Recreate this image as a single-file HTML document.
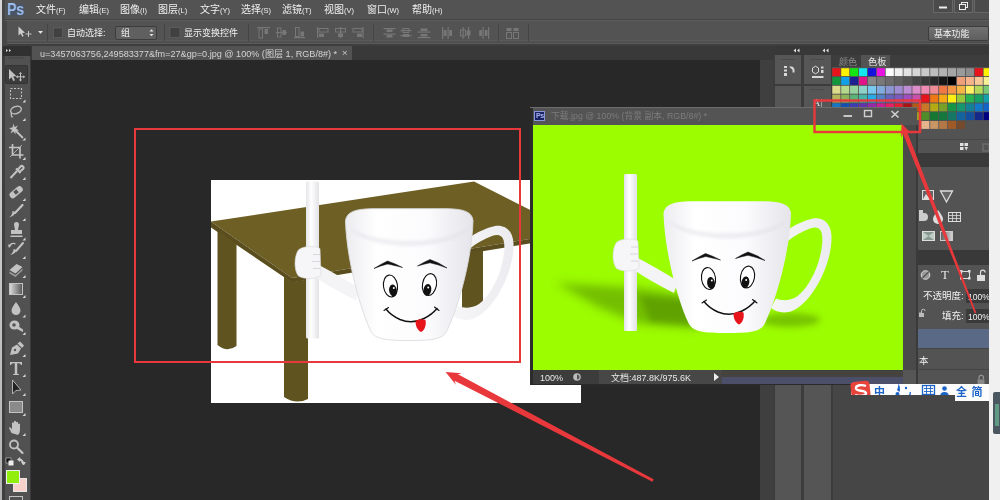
<!DOCTYPE html>
<html lang="zh-CN"><head><meta charset="utf-8"><title>Photoshop</title>
<style>
*{margin:0;padding:0;box-sizing:border-box}
html,body{width:1000px;height:500px;overflow:hidden;background:#282828}
body{font-family:"Liberation Sans","Noto Sans CJK SC",sans-serif;color:#e6e6e6;position:relative}
.abs{position:absolute}
span.abs,#menubar span{will-change:transform}
#menubar{left:0;top:0;width:1000px;height:19px;background:#535353}
#menubar span.m{position:absolute;top:2.500px;font-size:10px;line-height:13px;white-space:nowrap;color:#f0f0f0}
#menubar span.m i{font-style:normal;font-size:7.5px;position:relative;top:-0.5px}
#optbar{left:0;top:20px;width:1000px;height:24px;background:#535353;border-top:1px solid #5e5e5e}
.t9{font-size:9px;line-height:12px;white-space:nowrap;color:#f2f2f2}
</style></head><body>

<div class="abs" style="left:0;top:0;width:1000px;height:500px;background:#282828"></div>
<div id="menubar" class="abs">
<div class="abs" style="left:7px;top:3.500px;width:16.500px;height:12.500px;background:#3c5680;opacity:0.45;filter:blur(1px)"></div><span class="abs" style="left:6.800px;top:0px;font-size:17px;line-height:19px;font-weight:bold;color:#9cbcec;letter-spacing:-0.3px;transform:scaleX(0.84);transform-origin:0 0">Ps</span>
<span class="m" style="left:36px">文件<i>(F)</i></span>
<span class="m" style="left:79px">编辑<i>(E)</i></span>
<span class="m" style="left:120px">图像<i>(I)</i></span>
<span class="m" style="left:158px">图层<i>(L)</i></span>
<span class="m" style="left:200px">文字<i>(Y)</i></span>
<span class="m" style="left:241px">选择<i>(S)</i></span>
<span class="m" style="left:282px">滤镜<i>(T)</i></span>
<span class="m" style="left:324px">视图<i>(V)</i></span>
<span class="m" style="left:367px">窗口<i>(W)</i></span>
<span class="m" style="left:412px">帮助<i>(H)</i></span>
</div>
<div class="abs" style="left:0;top:19px;width:1000px;height:2px;background:#444"></div>
<div id="optbar" class="abs"></div>
<div class="abs" style="left:0;top:40px;width:1000px;height:1px;background:#5a5a5a"></div>
<div class="abs" style="left:0;top:41.500px;width:1000px;height:1px;background:#4c4c4c"></div>
<div class="abs" style="left:0;top:43px;width:1000px;height:1px;background:#5c5c5c"></div>
<div class="abs" style="left:0;top:44px;width:1000px;height:2px;background:#3e3e3e"></div>
<svg class="abs" style="left:0;top:20px" width="1000" height="25" viewBox="0 20 1000 25">
<path d="M18.500 26.500 L18.500 35.500 L20.700 33.600 L22.300 36.800 L23.700 36.100 L22.100 33 L25 32.700 Z" fill="#cdcdcd"/>
<path d="M28.500 31 V37 M25.500 34 H31.500" stroke="#c4c4c4" stroke-width="1"/>
<path d="M38 31 H43 L40.5 33.8 Z" fill="#e8e8e8"/>
<rect x="47" y="24" width="1" height="17" fill="#454545"/>
<rect x="53.500" y="28" width="9" height="9.500" fill="#414141" stroke="#666" stroke-width="0.6"/>
<rect x="115.500" y="26.500" width="41" height="13" rx="1.5" fill="#606060" stroke="#3c3c3c" stroke-width="1"/>
<path d="M149.5 31.5 L151.5 29.3 L153.500 31.500 Z M149.5 34 L151.5 36.2 L153.5 34 Z" fill="#e8e8e8"/>
<rect x="164" y="24" width="1" height="17" fill="#454545"/>
<rect x="170" y="27.5" width="10" height="10" fill="#414141" stroke="#666" stroke-width="0.6"/>
</svg>
<span class="abs t9" style="left:67px;top:26.5px">自动选择:</span>
<span class="abs t9" style="left:121px;top:26.5px">组</span>
<span class="abs t9" style="left:184px;top:26.5px">显示变换控件</span>
<svg class="abs" style="left:240px;top:20px" width="400" height="25" viewBox="240 20 400 25">
<rect x="257" y="27" width="13" height="1.2" fill="#777777"/><rect x="259" y="29" width="3.5" height="9" fill="none" stroke="#777777" stroke-width="1"/><rect x="264.5" y="29" width="3.5" height="5" fill="#777777"/>
<rect x="276" y="32" width="11" height="1.2" fill="#777777"/><rect x="277.5" y="28" width="3.5" height="9" fill="none" stroke="#777777" stroke-width="1"/><rect x="282.5" y="30" width="3.5" height="5" fill="#777777"/>
<rect x="294" y="37" width="11" height="1.2" fill="#777777"/><rect x="295.5" y="27.5" width="3.5" height="9" fill="none" stroke="#777777" stroke-width="1"/><rect x="300.5" y="31.5" width="3.5" height="5" fill="#777777"/>
<rect x="317" y="27" width="1.2" height="11" fill="#777777"/><rect x="319" y="28.5" width="9" height="3.5" fill="none" stroke="#777777" stroke-width="1"/><rect x="319" y="33.5" width="5" height="3.5" fill="#777777"/>
<rect x="340.0" y="27" width="1.2" height="11" fill="#777777"/><rect x="335.5" y="28.5" width="10" height="3.5" fill="none" stroke="#777777" stroke-width="1"/><rect x="338.0" y="33.5" width="5" height="3.5" fill="#777777"/>
<rect x="362.5" y="27" width="1.2" height="11" fill="#777777"/><rect x="353.0" y="28.5" width="9" height="3.5" fill="none" stroke="#777777" stroke-width="1"/><rect x="357.0" y="33.5" width="5" height="3.5" fill="#777777"/>
<rect x="383.5" y="28" width="12" height="1.2" fill="#777777"/><rect x="383.5" y="33.5" width="12" height="1.2" fill="#777777"/><rect x="386.5" y="29.5" width="6" height="2.5" fill="#777777"/><rect x="386.5" y="35" width="6" height="2.5" fill="#777777"/>
<rect x="400.5" y="30" width="11" height="1.2" fill="#777777"/><rect x="400.5" y="35" width="11" height="1.2" fill="#777777"/><rect x="403.0" y="28.5" width="6" height="4" fill="none" stroke="#777777" stroke-width="1"/><rect x="403.0" y="34" width="6" height="3" fill="#777777"/>
<rect x="417.5" y="31.5" width="13" height="1.2" fill="#777777"/><rect x="417.5" y="37" width="13" height="1.2" fill="#777777"/><rect x="420.5" y="28.5" width="7" height="2.5" fill="#777777"/><rect x="420.5" y="34" width="7" height="2.5" fill="#777777"/>
<rect x="442" y="27" width="1.2" height="12" fill="#777777"/><rect x="447.5" y="27" width="1.2" height="12" fill="#777777"/><rect x="443.7" y="30" width="2.8" height="6" fill="#777777"/><rect x="449.2" y="30" width="2.8" height="6" fill="#777777"/>
<rect x="462.5" y="27" width="1.2" height="12" fill="#777777"/><rect x="468.0" y="27" width="1.2" height="12" fill="#777777"/><rect x="460.5" y="30" width="5" height="6" fill="none" stroke="#777777" stroke-width="1"/><rect x="466.5" y="30.5" width="4" height="5" fill="#777777"/>
<rect x="482.5" y="27" width="1.2" height="12" fill="#777777"/><rect x="488.0" y="27" width="1.2" height="12" fill="#777777"/><rect x="479.2" y="30" width="2.8" height="6" fill="#777777"/><rect x="484.7" y="30" width="2.8" height="6" fill="#777777"/>
<rect x="506.5" y="28" width="5" height="3" fill="#777777"/><rect x="513.5" y="28" width="5" height="3" fill="#777777"/><rect x="506.5" y="32.5" width="5" height="6" fill="none" stroke="#777777" stroke-width="1"/><rect x="513.5" y="32.5" width="5" height="6" fill="none" stroke="#777777" stroke-width="1"/>
<rect x="248" y="24" width="1" height="17" fill="#454545"/><rect x="373" y="24" width="1" height="17" fill="#454545"/><rect x="498" y="24" width="1" height="17" fill="#454545"/><rect x="528" y="24" width="1" height="17" fill="#454545"/>
</svg>
<div class="abs" style="left:928px;top:25.500px;width:61px;height:15px;background:linear-gradient(#727272,#5e5e5e);border:1px solid #3c3c3c;border-radius:2px"></div>
<span class="abs t9" style="left:933.500px;top:27.500px;font-size:8.800px">基本功能</span>
<div class="abs" style="left:933px;top:-1px;width:20px;height:13.500px;background:#4b4b4b;border:1px solid #676767"></div>
<div class="abs" style="left:954px;top:-1px;width:19px;height:13.500px;background:#4b4b4b;border:1px solid #676767"></div>
<div class="abs" style="left:974px;top:-1px;width:16px;height:13.500px;background:#4b4b4b;border:1px solid #676767"></div>
<svg class="abs" style="left:930px;top:0" width="60" height="16"><rect x="9" y="6.500" width="8" height="2" fill="#eee"/><rect x="31.500" y="2.500" width="6" height="5" fill="none" stroke="#eee" stroke-width="1"/><rect x="29.500" y="4.500" width="6" height="5" fill="#4b4b4b" stroke="#eee" stroke-width="1"/></svg>
<div class="abs" style="left:3px;top:46px;width:986px;height:14px;background:#393939"></div>
<div class="abs" style="left:32px;top:46px;width:319.500px;height:14px;background:#535353"></div>
<span class="abs" style="left:40px;top:47.5px;font-size:9.100px;line-height:12px;color:#d4d4d4;white-space:nowrap">u=3457063756,249583377&amp;fm=27&amp;gp=0.jpg @ 100% (图层 1, RGB/8#) *</span>
<span class="abs" style="left:341.500px;top:47px;font-size:9.500px;line-height:12px;color:#c8c8c8">×</span>
<div class="abs" style="left:0;top:46px;width:31px;height:454px;background:#515151"></div>
<div class="abs" style="left:2px;top:21px;width:5px;height:25px;background:#464646"></div>
<div class="abs" style="left:2px;top:0;width:2.500px;height:21px;background:#474747"></div>
<div class="abs" style="left:2px;top:46px;width:3px;height:454px;background:#3e3e3e"></div>
<div class="abs" style="left:29.500px;top:46px;width:1.500px;height:454px;background:#3a3a3a"></div>
<div class="abs" style="left:3px;top:46px;width:28px;height:10px;background:#303030"></div>
<div class="abs" style="left:0;top:0;width:2px;height:500px;background:linear-gradient(#d6d6d6,#c4c4c4 60%,#b4b4b4)"></div>
<svg class="abs" style="left:0;top:46px" width="32" height="454" viewBox="0 46 32 454">
<path d="M6 49 L8 50.500 L6 52 Z M9 49 L11 50.500 L9 52 Z" fill="#ddd"/>
<rect x="8" y="57.500" width="16" height="1" fill="#444"/>
<rect x="5.500" y="65.500" width="22" height="18" rx="1" fill="#3c3c3c" stroke="#333" stroke-width="1"/>
<path d="M9 69 L9 79.500 L11.500 77.300 L13.300 81 L15 80.200 L13.200 76.600 L16.500 76.300 Z" fill="#c2c2c2"/><path d="M20.500 73.500 v6.500 M17.200 76.800 h6.600" stroke="#c2c2c2" stroke-width="1"/><path d="M20.500 72 l1.600 2 h-3.200 z M20.500 81.600 l1.600 -2 h-3.200 z M15.800 76.800 l2 -1.600 v3.200 z M25.200 76.800 l-2 -1.600 v3.200 z" fill="#c2c2c2"/><rect x="10.500" y="88.500" width="11" height="10" fill="none" stroke="#c2c2c2" stroke-width="1.100" stroke-dasharray="2 1.500"/><path d="M25.500 99.6 v3 h-3 z" fill="#d8d8d8"/><ellipse cx="16" cy="110" rx="5.500" ry="3.500" fill="none" stroke="#c2c2c2" stroke-width="1.400" transform="rotate(-20 16 110)"/><path d="M11.500 112.500 q-1 3 1 5" stroke="#c2c2c2" stroke-width="1.200" fill="none"/><path d="M25.500 118 v3 h-3 z" fill="#d8d8d8"/><path d="M14 129 L23 138" stroke="#c2c2c2" stroke-width="1.800"/><path d="M13.500 123.500 l1 3.500 l3.500 -1.500 l-2 3 l3 2 l-3.500 0.500 l0 3.500 l-2 -3 l-3 2 l1.500 -3.500 l-3 -2 l3.500 -0.500 z" fill="#c2c2c2"/><path d="M25.500 137.5 v3 h-3 z" fill="#d8d8d8"/><path d="M12.500 144 v11 h11 M9 147.500 h11 v11" fill="none" stroke="#c2c2c2" stroke-width="1.700"/><path d="M10 157 L22 145" stroke="#c2c2c2" stroke-width="0.800"/><path d="M25.500 157 v3 h-3 z" fill="#d8d8d8"/><path d="M10.500 178 L17 171" stroke="#c2c2c2" stroke-width="2"/><path d="M16 168.500 l4.500 4.500 M17.500 170 l3 -3.500 a1.500 1.500 0 0 1 2.500 2.500 l-3.500 3" stroke="#c2c2c2" stroke-width="2" fill="none"/><path d="M25.500 177 v3 h-3 z" fill="#d8d8d8"/><rect x="8.500" y="189" width="15" height="6.500" rx="3" fill="#c2c2c2" transform="rotate(-40 16 192)"/><rect x="14" y="190" width="4" height="4" fill="#555" transform="rotate(-40 16 192)"/><path d="M25.500 198 v3 h-3 z" fill="#d8d8d8"/><path d="M22.500 205 L15 213" stroke="#c2c2c2" stroke-width="2.200" stroke-linecap="round"/><path d="M15.500 212 q-1 4 -6.500 5.500 q3.500 -2.500 3.500 -6.500 z" fill="#c2c2c2"/><path d="M25.500 218 v3 h-3 z" fill="#d8d8d8"/><path d="M14 224.500 a2.500 2.500 0 0 1 5 0 l-1 5.500 h4 v4 h-11 v-4 h4 z" fill="#c2c2c2"/><rect x="10.500" y="235.500" width="12" height="1.500" fill="#c2c2c2"/><path d="M25.500 237.5 v3 h-3 z" fill="#d8d8d8"/><path d="M23 243 L16 251" stroke="#c2c2c2" stroke-width="2" stroke-linecap="round"/><path d="M16.500 250 q-1 4 -6.500 5 q3.500 -2.500 3.500 -6 z" fill="#c2c2c2"/><path d="M9.500 246.500 a4 4 0 0 1 6 -2.500" fill="none" stroke="#c2c2c2" stroke-width="1.300"/><path d="M8 244.500 l3.500 0.500 l-2.500 3 z" fill="#c2c2c2"/><path d="M25.500 256 v3 h-3 z" fill="#d8d8d8"/><path d="M9.500 270 l7 -6 l6 3 l-7 6.500 z" fill="#c2c2c2"/><path d="M9.500 271.500 l6 3.500 l7 -6.500 v2 l-7 6.500 l-6 -3.500 z" fill="#9a9a9a"/><path d="M25.500 275 v3 h-3 z" fill="#d8d8d8"/><rect x="9.500" y="283.500" width="13" height="11" fill="url(#tg)" stroke="#c2c2c2" stroke-width="1"/><path d="M25.500 295 v3 h-3 z" fill="#d8d8d8"/><path d="M16 302 c3 4 4.500 6.500 4.500 8.500 a4.500 4.500 0 0 1 -9 0 c0 -2 1.500 -4.500 4.500 -8.500 z" fill="#c2c2c2"/><path d="M25.500 314.5 v3 h-3 z" fill="#d8d8d8"/><ellipse cx="14.500" cy="325" rx="5" ry="4.500" fill="#c2c2c2"/><path d="M18 326 l5 3.500 v2.500 l-6 -3 z" fill="#c2c2c2"/><circle cx="14" cy="325" r="1.800" fill="#555"/><path d="M25.500 332 v3 h-3 z" fill="#d8d8d8"/><path d="M10 355 l2 -7.500 l5 -3 l4 4 l-3 5 z" fill="#c2c2c2"/><path d="M17.500 343.500 l2.500 -2 l4 4 l-2 2.500 z" fill="#c2c2c2"/><circle cx="15" cy="350" r="1.200" fill="#555"/><path d="M25.500 354 v3 h-3 z" fill="#d8d8d8"/><path d="M10 362 h12 v3 h-1 q-0.500 -1.800 -2 -1.800 h-1.800 v10 q0 1 1.800 1 v0.800 h-6 v-0.800 q1.800 0 1.800 -1 v-10 h-1.800 q-1.500 0 -2 1.800 h-1 z" fill="#c2c2c2"/><path d="M25.500 374 v3 h-3 z" fill="#d8d8d8"/><path d="M12.500 380 L12.500 394 L15.800 390.500 L21 390 Z" fill="#222" stroke="#c2c2c2" stroke-width="0.900"/><path d="M25.500 393 v3 h-3 z" fill="#d8d8d8"/><rect x="9.500" y="401.500" width="13" height="11" fill="#8a8a8a" stroke="#c2c2c2" stroke-width="1"/><path d="M25.500 413 v3 h-3 z" fill="#d8d8d8"/><path d="M11.500 433 l-2.500 -5 q0.500 -1.500 2 0 l1 1.500 v-6.500 q1 -1.500 2 0 v-1.500 q1 -1.500 2 0 v1 q1 -1.500 2 0 v1.500 q1 -1.200 2 0 v6 q0 3 -2 5 z" fill="#c2c2c2"/><path d="M25.500 433 v3 h-3 z" fill="#d8d8d8"/><circle cx="14" cy="444.500" r="4" fill="none" stroke="#c2c2c2" stroke-width="1.800"/><path d="M17 447.500 L22.500 453" stroke="#c2c2c2" stroke-width="2.200" stroke-linecap="round"/><rect x="6" y="458" width="5" height="5" fill="#111" stroke="#ccc" stroke-width="0.600"/><rect x="8.500" y="460.500" width="5" height="5" fill="#eee"/><path d="M19 459.500 q4 -1 4.500 4 M17.500 459.500 l2.500 -1.800 v3.600 z M23.500 465 l-1.800 -2.500 h3.600 z" stroke="#ccc" stroke-width="1" fill="#ccc"/><rect x="13.500" y="478.500" width="13" height="13" fill="#f8d2c8" stroke="#e8e8e8" stroke-width="1"/><rect x="6.500" y="470.500" width="13" height="13" fill="#92ee0c" stroke="#ececec" stroke-width="1"/><rect x="9.500" y="496.500" width="13" height="6" fill="none" stroke="#c2c2c2" stroke-width="1"/><defs><linearGradient id="tg" x1="0" x2="1"><stop offset="0" stop-color="#ddd"/><stop offset="1" stop-color="#555"/></linearGradient></defs>
</svg>
<div class="abs" style="left:773px;top:46px;width:216px;height:454px;background:#535353"></div>
<div class="abs" style="left:760px;top:60px;width:13px;height:440px;background:#3f3f3f"></div>
<div class="abs" style="left:773px;top:46px;width:216px;height:8.500px;background:#383838"></div>
<div class="abs" style="left:773px;top:55px;width:60px;height:52px;background:#3c3c3c"></div>
<div class="abs" style="left:775px;top:54.500px;width:26px;height:29.500px;background:#565656"></div>
<div class="abs" style="left:775px;top:85.500px;width:26px;height:21.500px;background:#565656"></div>
<div class="abs" style="left:804px;top:54.500px;width:27px;height:29.500px;background:#565656"></div>
<div class="abs" style="left:804px;top:85.500px;width:27px;height:21.500px;background:#565656"></div>
<svg class="abs" style="left:773px;top:46px" width="60" height="62" viewBox="773 46 60 62">
<path d="M796 48.500 L793.500 50.500 L796 52.500 Z M799.500 48.500 L797 50.500 L799.500 52.500 Z" fill="#ddd"/>
<path d="M825 48.500 L822.500 50.500 L825 52.500 Z M828.500 48.500 L826 50.500 L828.500 52.500 Z" fill="#ddd"/>
<rect x="781" y="59" width="14" height="1" fill="#4a4a4a"/><rect x="810" y="59" width="14" height="1" fill="#4a4a4a"/><rect x="810" y="89" width="14" height="1" fill="#4a4a4a"/>
<g fill="#d8d8d8"><rect x="784" y="66" width="3" height="2"/><rect x="784" y="69.500" width="3" height="2"/><rect x="784" y="73" width="3" height="3"/>
<path d="M789 66.500 h3 q3 1 2.500 6 l-2 0 q0.500 -3.500 -1.500 -4 z"/></g>
<g fill="#d8d8d8"><path d="M812.500 68 l3 -1.800 l3 1.800 v4 l-3 1.800 l-3 -1.800 z" fill="none" stroke="#d8d8d8" stroke-width="1"/><rect x="821" y="66.500" width="2.500" height="2"/><rect x="821" y="70" width="2.500" height="3"/><rect x="812" y="76" width="11.500" height="2"/></g>
</svg>
<span class="abs" style="left:813px;top:96.500px;font-size:10px;line-height:12px;color:#ddd;font-family:'Liberation Serif',serif">A|</span>
<div class="abs" style="left:833px;top:55px;width:156px;height:13px;background:#3d3d3d"></div>
<div class="abs" style="left:861px;top:54.500px;width:29px;height:13px;background:#535353"></div>
<span class="abs" style="left:838.500px;top:55.500px;font-size:9px;line-height:12px;color:#8a8a8a">颜色</span>
<span class="abs" style="left:867.500px;top:55.500px;font-size:9.200px;line-height:12px;color:#e8e8e8">色板</span>
<svg class="abs" style="left:832px;top:67px" width="158" height="66" viewBox="832 67 158 66">
<rect x="832" y="67" width="158" height="66" fill="#535353"/>
<rect x="832.3" y="68.2" width="8.100" height="7.900" fill="#e8141c"/>
<rect x="841.2" y="68.2" width="8.100" height="7.900" fill="#fff200"/>
<rect x="850.1" y="68.2" width="8.100" height="7.900" fill="#14e614"/>
<rect x="859.0" y="68.2" width="8.100" height="7.900" fill="#14e6f0"/>
<rect x="867.9" y="68.2" width="8.100" height="7.900" fill="#1414dc"/>
<rect x="876.8" y="68.2" width="8.100" height="7.900" fill="#e814e0"/>
<rect x="885.7" y="68.2" width="8.100" height="7.900" fill="#ffffff"/>
<rect x="894.6" y="68.2" width="8.100" height="7.900" fill="#f0f0f0"/>
<rect x="903.5" y="68.2" width="8.100" height="7.900" fill="#e2e2e2"/>
<rect x="912.4" y="68.2" width="8.100" height="7.900" fill="#d6d6d6"/>
<rect x="921.3" y="68.2" width="8.100" height="7.900" fill="#cacaca"/>
<rect x="930.2" y="68.2" width="8.100" height="7.900" fill="#bebebe"/>
<rect x="939.1" y="68.2" width="8.100" height="7.900" fill="#b2b2b2"/>
<rect x="948.0" y="68.2" width="8.100" height="7.900" fill="#a6a6a6"/>
<rect x="956.9" y="68.2" width="8.100" height="7.900" fill="#9a9a9a"/>
<rect x="965.8" y="68.2" width="8.100" height="7.900" fill="#8e8e8e"/>
<rect x="974.7" y="68.2" width="8.100" height="7.900" fill="#e8141c"/>
<rect x="983.6" y="68.2" width="8.100" height="7.900" fill="#fff200"/>
<rect x="832.3" y="77.0" width="8.100" height="7.900" fill="#14963c"/>
<rect x="841.2" y="77.0" width="8.100" height="7.900" fill="#14a0e6"/>
<rect x="850.1" y="77.0" width="8.100" height="7.900" fill="#1c2090"/>
<rect x="859.0" y="77.0" width="8.100" height="7.900" fill="#e01488"/>
<rect x="867.9" y="77.0" width="8.100" height="7.900" fill="#868686"/>
<rect x="876.8" y="77.0" width="8.100" height="7.900" fill="#787878"/>
<rect x="885.7" y="77.0" width="8.100" height="7.900" fill="#6c6c6c"/>
<rect x="894.6" y="77.0" width="8.100" height="7.900" fill="#606060"/>
<rect x="903.5" y="77.0" width="8.100" height="7.900" fill="#545454"/>
<rect x="912.4" y="77.0" width="8.100" height="7.900" fill="#464646"/>
<rect x="921.3" y="77.0" width="8.100" height="7.900" fill="#3a3a3a"/>
<rect x="930.2" y="77.0" width="8.100" height="7.900" fill="#2a2a2a"/>
<rect x="939.1" y="77.0" width="8.100" height="7.900" fill="#161616"/>
<rect x="948.0" y="77.0" width="8.100" height="7.900" fill="#000000"/>
<rect x="956.9" y="77.0" width="8.100" height="7.900" fill="#f0a078"/>
<rect x="965.8" y="77.0" width="8.100" height="7.900" fill="#f5b48c"/>
<rect x="974.7" y="77.0" width="8.100" height="7.900" fill="#f5c896"/>
<rect x="983.6" y="77.0" width="8.100" height="7.900" fill="#f5f096"/>
<rect x="832.3" y="85.8" width="8.100" height="7.900" fill="#dcdc8c"/>
<rect x="841.2" y="85.8" width="8.100" height="7.900" fill="#b4d88c"/>
<rect x="850.1" y="85.8" width="8.100" height="7.900" fill="#96d2a0"/>
<rect x="859.0" y="85.8" width="8.100" height="7.900" fill="#8cd2c8"/>
<rect x="867.9" y="85.8" width="8.100" height="7.900" fill="#78c8f0"/>
<rect x="876.8" y="85.8" width="8.100" height="7.900" fill="#82aadc"/>
<rect x="885.7" y="85.8" width="8.100" height="7.900" fill="#8c96d2"/>
<rect x="894.6" y="85.8" width="8.100" height="7.900" fill="#a08cd2"/>
<rect x="903.5" y="85.8" width="8.100" height="7.900" fill="#be8cd2"/>
<rect x="912.4" y="85.8" width="8.100" height="7.900" fill="#dc8cc8"/>
<rect x="921.3" y="85.8" width="8.100" height="7.900" fill="#f08cb4"/>
<rect x="930.2" y="85.8" width="8.100" height="7.900" fill="#f08c96"/>
<rect x="939.1" y="85.8" width="8.100" height="7.900" fill="#f07846"/>
<rect x="948.0" y="85.8" width="8.100" height="7.900" fill="#f59646"/>
<rect x="956.9" y="85.8" width="8.100" height="7.900" fill="#f5b446"/>
<rect x="965.8" y="85.8" width="8.100" height="7.900" fill="#fff064"/>
<rect x="974.7" y="85.8" width="8.100" height="7.900" fill="#b4d85a"/>
<rect x="983.6" y="85.8" width="8.100" height="7.900" fill="#78c878"/>
<rect x="832.3" y="94.6" width="8.100" height="7.900" fill="#b4b45a"/>
<rect x="841.2" y="94.6" width="8.100" height="7.900" fill="#8cb45a"/>
<rect x="850.1" y="94.6" width="8.100" height="7.900" fill="#5ab478"/>
<rect x="859.0" y="94.6" width="8.100" height="7.900" fill="#46b4aa"/>
<rect x="867.9" y="94.6" width="8.100" height="7.900" fill="#28aae6"/>
<rect x="876.8" y="94.6" width="8.100" height="7.900" fill="#5082c8"/>
<rect x="885.7" y="94.6" width="8.100" height="7.900" fill="#6464be"/>
<rect x="894.6" y="94.6" width="8.100" height="7.900" fill="#7d5abe"/>
<rect x="903.5" y="94.6" width="8.100" height="7.900" fill="#a050be"/>
<rect x="912.4" y="94.6" width="8.100" height="7.900" fill="#c850aa"/>
<rect x="921.3" y="94.6" width="8.100" height="7.900" fill="#e6141c"/>
<rect x="930.2" y="94.6" width="8.100" height="7.900" fill="#f07814"/>
<rect x="939.1" y="94.6" width="8.100" height="7.900" fill="#f5aa14"/>
<rect x="948.0" y="94.6" width="8.100" height="7.900" fill="#fff014"/>
<rect x="956.9" y="94.6" width="8.100" height="7.900" fill="#96c83c"/>
<rect x="965.8" y="94.6" width="8.100" height="7.900" fill="#28b450"/>
<rect x="974.7" y="94.6" width="8.100" height="7.900" fill="#14a064"/>
<rect x="983.6" y="94.6" width="8.100" height="7.900" fill="#14a0aa"/>
<rect x="832.3" y="103.4" width="8.100" height="7.900" fill="#1478c8"/>
<rect x="841.2" y="103.4" width="8.100" height="7.900" fill="#1450b4"/>
<rect x="850.1" y="103.4" width="8.100" height="7.900" fill="#3c3cb4"/>
<rect x="859.0" y="103.4" width="8.100" height="7.900" fill="#6432aa"/>
<rect x="867.9" y="103.4" width="8.100" height="7.900" fill="#9628aa"/>
<rect x="876.8" y="103.4" width="8.100" height="7.900" fill="#c81e96"/>
<rect x="885.7" y="103.4" width="8.100" height="7.900" fill="#e61e64"/>
<rect x="894.6" y="103.4" width="8.100" height="7.900" fill="#e61e32"/>
<rect x="903.5" y="103.4" width="8.100" height="7.900" fill="#aa1414"/>
<rect x="912.4" y="103.4" width="8.100" height="7.900" fill="#b45a14"/>
<rect x="921.3" y="103.4" width="8.100" height="7.900" fill="#c87828"/>
<rect x="930.2" y="103.4" width="8.100" height="7.900" fill="#b4aa14"/>
<rect x="939.1" y="103.4" width="8.100" height="7.900" fill="#78a028"/>
<rect x="948.0" y="103.4" width="8.100" height="7.900" fill="#149646"/>
<rect x="956.9" y="103.4" width="8.100" height="7.900" fill="#14966e"/>
<rect x="965.8" y="103.4" width="8.100" height="7.900" fill="#148296"/>
<rect x="974.7" y="103.4" width="8.100" height="7.900" fill="#1478c8"/>
<rect x="983.6" y="103.4" width="8.100" height="7.900" fill="#1464c8"/>
<rect x="832.3" y="112.2" width="8.100" height="7.900" fill="#14146e"/>
<rect x="841.2" y="112.2" width="8.100" height="7.900" fill="#3c1478"/>
<rect x="850.1" y="112.2" width="8.100" height="7.900" fill="#64147d"/>
<rect x="859.0" y="112.2" width="8.100" height="7.900" fill="#8c1464"/>
<rect x="867.9" y="112.2" width="8.100" height="7.900" fill="#aa143c"/>
<rect x="876.8" y="112.2" width="8.100" height="7.900" fill="#aa1420"/>
<rect x="885.7" y="112.2" width="8.100" height="7.900" fill="#781414"/>
<rect x="894.6" y="112.2" width="8.100" height="7.900" fill="#8c4614"/>
<rect x="903.5" y="112.2" width="8.100" height="7.900" fill="#a07814"/>
<rect x="912.4" y="112.2" width="8.100" height="7.900" fill="#a0a01e"/>
<rect x="921.3" y="112.2" width="8.100" height="7.900" fill="#508c28"/>
<rect x="930.2" y="112.2" width="8.100" height="7.900" fill="#147832"/>
<rect x="939.1" y="112.2" width="8.100" height="7.900" fill="#14783c"/>
<rect x="948.0" y="112.2" width="8.100" height="7.900" fill="#147864"/>
<rect x="956.9" y="112.2" width="8.100" height="7.900" fill="#1464a0"/>
<rect x="965.8" y="112.2" width="8.100" height="7.900" fill="#1450a0"/>
<rect x="974.7" y="112.2" width="8.100" height="7.900" fill="#14288c"/>
<rect x="983.6" y="112.2" width="8.100" height="7.900" fill="#000080"/>
<rect x="921.3" y="121.0" width="8.100" height="7.900" fill="#e6b48c"/>
<rect x="930.2" y="121.0" width="8.100" height="7.900" fill="#c89664"/>
<rect x="939.1" y="121.0" width="8.100" height="7.900" fill="#b47846"/>
<rect x="948.0" y="121.0" width="8.100" height="7.900" fill="#a05a28"/>
<rect x="956.9" y="121.0" width="8.100" height="7.900" fill="#8c4614" opacity="0.6"/>
</svg>
<div class="abs" style="left:917px;top:132px;width:72px;height:368px;background:#535353"></div>
<div class="abs" style="left:917px;top:138.500px;width:72px;height:1.500px;background:#484848"></div>
<div class="abs" style="left:917px;top:153px;width:72px;height:14px;background:#3a3a3a"></div>
<div class="abs" style="left:917.500px;top:250px;width:72px;height:15px;background:#393939"></div>
<div class="abs" style="left:966px;top:289px;width:23px;height:14px;background:#3a3a3a"></div>
<div class="abs" style="left:966px;top:309px;width:23px;height:14px;background:#3a3a3a"></div>
<span class="abs t9" style="left:923px;top:290px;font-size:9.500px">不透明度:</span>
<span class="abs t9" style="left:942px;top:310px;font-size:9.500px">填充:</span>
<span class="abs t9" style="left:968px;top:290.500px;font-size:8.500px">100%</span>
<span class="abs t9" style="left:968px;top:310.500px;font-size:8.500px">100%</span>
<div class="abs" style="left:917.500px;top:329px;width:72px;height:19px;background:#5a6986"></div>
<div class="abs" style="left:919px;top:348px;width:70px;height:1px;background:#444"></div>
<div class="abs" style="left:919px;top:369px;width:70px;height:1px;background:#444"></div>
<span class="abs t9" style="left:919px;top:354.500px;font-size:9.500px">本</span>
<svg class="abs" style="left:917px;top:132px" width="72" height="260" viewBox="917 132 72 260">
<g fill="#e0e0e0"><rect x="960" y="143" width="3.500" height="3"/><rect x="964.500" y="143" width="3.500" height="3"/><rect x="960" y="147" width="3.500" height="3"/><path d="M964.500 147 h3.500 l-1.700 3.500 z"/></g>
<rect x="983" y="144" width="6" height="7" fill="none" stroke="#777" stroke-width="1"/>
<rect x="922.500" y="190.500" width="11" height="9" fill="#666" stroke="#ddd" stroke-width="1"/><path d="M923 199 l3 -5 l2.500 3 l2 -2 l3 4 z" fill="#ddd"/>
<path d="M940.500 191 h12 l-6 11 z" fill="#666" stroke="#ddd" stroke-width="1.300"/>
<path d="M919 210 h4 v3 h-4 z M919 213 h5 a4 4 0 0 1 0 8 h-5 z" fill="#ccc"/>
<path d="M938 210 c3 4 5 7 5 9 a5 5 0 0 1 -10 0 c0 -2 2 -5 5 -9 z" fill="#ddd"/>
<rect x="948.500" y="212.500" width="12" height="9" fill="none" stroke="#ddd" stroke-width="1"/><path d="M952.500 212.500 v9 M956.500 212.500 v9 M948.500 215.500 h12 M948.500 218.500 h12" stroke="#ddd" stroke-width="0.800"/>
<rect x="922.500" y="231.500" width="12" height="9" fill="#8a9a92" stroke="#ddd" stroke-width="1"/><path d="M923 232 l5.500 4 l-5.500 4 z M934 232 l-5.500 4 l5.500 4 z" fill="#bfcfc8"/>
<rect x="940.500" y="231.500" width="12" height="9" fill="url(#gr1)" stroke="#ccc" stroke-width="1"/>
<circle cx="925.500" cy="275" r="4.300" fill="#999" stroke="#ddd" stroke-width="1"/><path d="M922.500 278 l6 -6" stroke="#555" stroke-width="1.500"/>
<rect x="961.500" y="271.500" width="8" height="7" fill="none" stroke="#ddd" stroke-width="1"/><rect x="960" y="270" width="2.500" height="2.500" fill="#ddd"/><rect x="968" y="270" width="2.500" height="2.500" fill="#ddd"/><rect x="960" y="277" width="2.500" height="2.500" fill="#ddd"/><rect x="968" y="277" width="2.500" height="2.500" fill="#ddd"/>
<rect x="977" y="275" width="8" height="6" fill="#ddd"/><path d="M980.500 275 v-2.500 a2.300 2.300 0 0 1 4.600 0" fill="none" stroke="#ddd" stroke-width="1.200"/>
<rect x="977.500" y="379.500" width="7" height="5" fill="#888"/><path d="M979 379.500 v-2 a2.200 2.200 0 0 1 4.400 0 v2" fill="none" stroke="#999" stroke-width="1.100"/>
<path d="M919 313 h2.500 v-2 a1.800 1.800 0 0 1 3.600 0" fill="none" stroke="#bbb" stroke-width="1"/><rect x="919" y="313" width="5" height="4" fill="#bbb"/>
<defs><linearGradient id="gr1" x1="0" x2="1"><stop offset="0" stop-color="#5a5a5a"/><stop offset="1" stop-color="#d8d8d8"/></linearGradient></defs>
</svg>
<span class="abs" style="left:941px;top:268px;font-size:13px;line-height:14px;color:#e4e4e4;font-family:'Liberation Serif',serif">T</span>
<div class="abs" style="left:773px;top:385px;width:60px;height:115px;background:#3c3c3c"></div>
<div class="abs" style="left:775px;top:385px;width:26px;height:115px;background:#555"></div>
<div class="abs" style="left:804px;top:385px;width:27px;height:115px;background:#555"></div>
<div class="abs" style="left:833px;top:385px;width:156px;height:115px;background:#464646"></div>
<svg class="abs" style="left:32px;top:60px" width="728" height="440" viewBox="32 60 728 440">
<defs>
<filter id="blur6" x="-30%" y="-80%" width="160%" height="260%"><feGaussianBlur stdDeviation="5"/></filter>
<filter id="blur4" x="-30%" y="-80%" width="160%" height="260%"><feGaussianBlur stdDeviation="3"/></filter>
<linearGradient id="cupg" x1="0" x2="1"><stop offset="0" stop-color="#ececf0"/><stop offset="0.250" stop-color="#ffffff"/><stop offset="0.650" stop-color="#fbfbfd"/><stop offset="1" stop-color="#e4e4ea"/></linearGradient>
<filter id="blur1"><feGaussianBlur stdDeviation="1.5"/></filter>
<linearGradient id="handg" x1="0" x2="1"><stop offset="0" stop-color="#f6f6f8"/><stop offset="1" stop-color="#ececf0"/></linearGradient>
<linearGradient id="rimg" x1="0" x2="1"><stop offset="0" stop-color="#f4f4f6"/><stop offset="0.450" stop-color="#dadade"/><stop offset="0.700" stop-color="#ececf0"/><stop offset="1" stop-color="#f8f8fa"/></linearGradient>
<linearGradient id="stickg" x1="0" x2="1"><stop offset="0" stop-color="#e4e4e8"/><stop offset="0.400" stop-color="#ffffff"/><stop offset="1" stop-color="#e2e2e6"/></linearGradient>
</defs>
<rect x="211" y="180" width="370" height="223" fill="#ffffff"/>
<path d="M211 221.500 L474 181.500 L560 225 L560 234 L292 278 Z" fill="#6e5f24"/>
<path d="M211 221.500 L292 278 L560 234 L560 238.500 L292 282.500 L211 227.500 Z" fill="#5a4e1e"/>
<path d="M217.500 231 L236.500 244 L236.500 346 Q227 353 217.500 345 Z" fill="#5f5320"/>
<path d="M284 276.500 L292 282 L308 279.500 L308 399 Q296 405 284 397 Z" fill="#5f5320"/>
<path d="M462 253.500 L483 250 L483 306 L462 309 Z" fill="#5f5320"/>
<g transform="translate(-318,7.5)"><rect x="624" y="174" width="13" height="157" rx="1.5" fill="url(#stickg)"/><path d="M636 257 Q655 267 678 281 L674 293 Q650 281 634 270 Z" fill="#f4f4f6"/><path d="M786 231 C796 224 806 220 813 218.500 C824 217 831 224 831.500 236 C832 250 827 268 818 284 C810 298 800 308 792 311 C784 314 776 312 771 308 L776 298.500 C782 301 790 301 797 296.500 C806 290 814 276 818.500 262 C822 250 823.500 240 821.500 232.500 C820 227 815 226.500 810 228.500 C802 231.500 794 236 788 241 Z" fill="url(#handg)"/><path d="M663.500 213 C665 204 674 201.500 690 201.200 L765 201.200 C781 201.500 790 204 791 213 C790 250 777 298 765.500 322 C762 332 750 333 727 333 C704 333 692 332 688 322 C677 298 664.500 250 663.500 213 Z" fill="url(#cupg)" stroke="#dcdce0" stroke-width="0.9"/><path d="M667 219 C690 238 764 238 788 219 C770 245 684 245 667 219 Z" fill="#d8d8e0" opacity="0.4" filter="url(#blur1)"/><path d="M616 243 C620 238 634 238 638 241 L639 268 C634 272 620 272 616 268 C612 262 612 250 616 243 Z" fill="#f6f6f8" stroke="#d8d8dc" stroke-width="0.6"/>
<path d="M631 247 L638 247 M630 254 L638 254 M631 261 L638 261" stroke="#cfcfd4" stroke-width="0.8" fill="none"/><path d="M692 261 Q700 256 705.5 253.5 Q713 256 720.500 260 Q711 257.5 705.5 256.5 Q699 258 692 261 Z" fill="#111" stroke="#111" stroke-width="0.500"/>
<path d="M735.500 258.500 Q742 254.500 748 252 Q757 255 765 260.500 Q756 257 748 255.300 Q742 256.500 735.500 258.500 Z" fill="#111" stroke="#111" stroke-width="0.500"/>
<ellipse cx="708.500" cy="278.500" rx="7" ry="11" fill="#fff" stroke="#111" stroke-width="1.100" transform="rotate(-8 708.500 278.500)"/>
<ellipse cx="711" cy="283" rx="3.900" ry="6" fill="#111" transform="rotate(-8 711 283)"/>
<circle cx="711.800" cy="280.500" r="1" fill="#fff"/>
<ellipse cx="747.500" cy="277" rx="7" ry="11" fill="#fff" stroke="#111" stroke-width="1.100" transform="rotate(10 747.500 277)"/>
<ellipse cx="745.400" cy="282.400" rx="3.900" ry="6" fill="#111" transform="rotate(10 745.400 282.400)"/>
<circle cx="746.200" cy="280" r="1" fill="#fff"/>
<path d="M704 301.500 Q709 308 718 312 Q730 317 742 311 Q750 307 755 301" fill="none" stroke="#111" stroke-width="1.400" stroke-linecap="round"/>
<path d="M702 303 L706.500 300 M752.500 299.500 L757 303" stroke="#111" stroke-width="1.100" stroke-linecap="round"/>
<path d="M733.500 313.500 C736 311.500 741 311 743.500 312.500 C744.500 318 742.500 323 739 324.500 C735 322.500 733.500 318 733.500 313.500 Z" fill="#e8141c"/></g>
</svg>
<div class="abs" style="left:530px;top:107px;width:387px;height:278px;background:#4c4c4c"></div>
<div class="abs" style="left:530px;top:107px;width:387px;height:18px;background:#545454;border-top:1px solid #6c6c6c"></div>
<div class="abs" style="left:530px;top:108px;width:3px;height:277px;background:#2c2c2c"></div>
<div class="abs" style="left:533px;top:370px;width:384px;height:15px;background:#3e3e3e"></div>
<div class="abs" style="left:533px;top:370px;width:189px;height:15px;background:#474747"></div>
<div class="abs" style="left:533px;top:370px;width:66px;height:15px;background:#3c3c3c"></div>
<div class="abs" style="left:722px;top:371px;width:181px;height:6px;background:#46423e"></div>
<div class="abs" style="left:722px;top:377px;width:181px;height:7px;background:#4b4f6a"></div>
<div class="abs" style="left:903px;top:370px;width:14px;height:15px;background:#565656"></div>
<div class="abs" style="left:530px;top:384px;width:387px;height:1px;background:#2a2a2a"></div>
<div class="abs" style="left:903px;top:125px;width:14px;height:245px;background:#4a4a4a"></div>
<div class="abs" style="left:534px;top:110.500px;width:10.500px;height:10.500px;background:#1a2266;border:0.500px solid #8a96d8"></div>
<span class="abs" style="left:535.500px;top:111px;font-size:7px;line-height:9px;font-weight:bold;color:#aab6f0;letter-spacing:-0.300px">Ps</span>
<span class="abs" style="left:550.500px;top:110px;font-size:8.800px;line-height:12px;color:#7c7c7c;white-space:nowrap">下载.jpg @ 100% (背景 副本, RGB/8#) *</span>
<span class="abs t9" style="left:540px;top:371.500px;color:#e8e8e8">100%</span>
<span class="abs t9" style="left:611px;top:371.500px;color:#e8e8e8">文档:487.8K/975.6K</span>
<svg class="abs" style="left:533px;top:125px" width="370" height="245" viewBox="533 125 370 245">
<rect x="533" y="125" width="370" height="245" fill="#9cfc00"/>
<g transform="translate(0,0)"><path d="M556 283 L640 288 L694 296 L700 328 L640 324 L600 308 Z" fill="#4c8200" opacity="0.5" filter="url(#blur6)"/>
<path d="M640 296 L694 300 L698 326 L650 322 Z" fill="#3c7000" opacity="0.35" filter="url(#blur4)"/>
<ellipse cx="790" cy="320" rx="30" ry="7" fill="#4c8200" opacity="0.45" filter="url(#blur4)"/><rect x="624" y="174" width="13" height="157" rx="1.5" fill="url(#stickg)"/><path d="M636 257 Q655 267 678 281 L674 293 Q650 281 634 270 Z" fill="#f4f4f6"/><path d="M786 231 C796 224 806 220 813 218.500 C824 217 831 224 831.500 236 C832 250 827 268 818 284 C810 298 800 308 792 311 C784 314 776 312 771 308 L776 298.500 C782 301 790 301 797 296.500 C806 290 814 276 818.500 262 C822 250 823.500 240 821.500 232.500 C820 227 815 226.500 810 228.500 C802 231.500 794 236 788 241 Z" fill="url(#handg)"/><path d="M663.500 213 C665 204 674 201.500 690 201.200 L765 201.200 C781 201.500 790 204 791 213 C790 250 777 298 765.500 322 C762 332 750 333 727 333 C704 333 692 332 688 322 C677 298 664.500 250 663.500 213 Z" fill="url(#cupg)" /><path d="M667 219 C690 238 764 238 788 219 C770 245 684 245 667 219 Z" fill="#d8d8e0" opacity="0.4" filter="url(#blur1)"/><path d="M616 243 C620 238 634 238 638 241 L639 268 C634 272 620 272 616 268 C612 262 612 250 616 243 Z" fill="#f6f6f8" stroke="#d8d8dc" stroke-width="0.6"/>
<path d="M631 247 L638 247 M630 254 L638 254 M631 261 L638 261" stroke="#cfcfd4" stroke-width="0.8" fill="none"/><path d="M692 261 Q700 256 705.5 253.5 Q713 256 720.500 260 Q711 257.5 705.5 256.5 Q699 258 692 261 Z" fill="#111" stroke="#111" stroke-width="0.500"/>
<path d="M735.500 258.500 Q742 254.500 748 252 Q757 255 765 260.500 Q756 257 748 255.300 Q742 256.500 735.500 258.500 Z" fill="#111" stroke="#111" stroke-width="0.500"/>
<ellipse cx="708.500" cy="278.500" rx="7" ry="11" fill="#fff" stroke="#111" stroke-width="1.100" transform="rotate(-8 708.500 278.500)"/>
<ellipse cx="711" cy="283" rx="3.900" ry="6" fill="#111" transform="rotate(-8 711 283)"/>
<circle cx="711.800" cy="280.500" r="1" fill="#fff"/>
<ellipse cx="747.500" cy="277" rx="7" ry="11" fill="#fff" stroke="#111" stroke-width="1.100" transform="rotate(10 747.500 277)"/>
<ellipse cx="745.400" cy="282.400" rx="3.900" ry="6" fill="#111" transform="rotate(10 745.400 282.400)"/>
<circle cx="746.200" cy="280" r="1" fill="#fff"/>
<path d="M704 301.500 Q709 308 718 312 Q730 317 742 311 Q750 307 755 301" fill="none" stroke="#111" stroke-width="1.400" stroke-linecap="round"/>
<path d="M702 303 L706.500 300 M752.500 299.500 L757 303" stroke="#111" stroke-width="1.100" stroke-linecap="round"/>
<path d="M733.500 313.500 C736 311.500 741 311 743.500 312.500 C744.500 318 742.500 323 739 324.500 C735 322.500 733.500 318 733.500 313.500 Z" fill="#e8141c"/></g>
</svg>
<svg class="abs" style="left:530px;top:107px" width="400" height="280" viewBox="530 107 400 280">
<circle cx="577" cy="377" r="3.800" fill="#bbb"/><path d="M577 374.500 a2.500 2.500 0 0 1 0 5" fill="#555"/>
<path d="M714 373 L719 377 L714 381 Z" fill="#eee"/>
<rect x="843.500" y="115" width="8.500" height="2" fill="#c8c8c8"/>
<rect x="864.500" y="110.500" width="7" height="6" fill="none" stroke="#d0d0d0" stroke-width="1.400"/>
<path d="M891.500 111 L898.500 117.500 M898.500 111 L891.500 117.500" stroke="#d0d0d0" stroke-width="1.600"/>
</svg>
<div class="abs" style="left:915.500px;top:125px;width:2px;height:375px;background:#3a3a3a"></div>
<div class="abs" style="left:989px;top:0;width:11px;height:500px;background:#f0f0f0"></div>
<div class="abs" style="left:993px;top:392px;width:7px;height:42px;background:#4a5660;border-radius:2px 0 0 2px"></div>
<div class="abs" style="left:995px;top:404px;width:4px;height:22px;background:#5e9a84"></div>
<div class="abs" style="left:851px;top:384px;width:138px;height:17px;background:#fdfdfd"></div>
<span class="abs" style="left:874px;top:385px;font-size:11px;line-height:14px;color:#1c64c8;font-weight:bold;white-space:nowrap;letter-spacing:0">中</span>
<span class="abs" style="left:955.500px;top:385px;font-size:11px;line-height:14px;color:#1c64c8;font-weight:bold;white-space:nowrap;letter-spacing:4.500px">全简</span>
<svg class="abs" style="left:845px;top:378px" width="145" height="24" viewBox="845 378 145 24">
<path d="M850.500 386 Q850 382.500 854 382 L865 380.800 Q869 380.500 869.500 384 L870.500 394 Q870.800 397.500 867 398 L856 399 Q852 399.300 851.500 396 Z" fill="#e8443c"/>
<path d="M866 386 C862 384.300 855.500 385 856 388.500 C856.500 391.500 865.500 390 866 393 C866.500 396 859 396.500 855 395" fill="none" stroke="#fff" stroke-width="2.400"/>
<path d="M897 390 q2 -5 1 -7 q3 4 1.500 9 z" fill="#1c64c8"/><circle cx="897.500" cy="394" r="2" fill="#1c64c8"/>
<circle cx="906" cy="388" r="1.200" fill="#1c64c8"/><path d="M910 392 q1 2 -1 3.500" stroke="#1c64c8" stroke-width="1.300" fill="none"/>
<rect x="922.500" y="385.500" width="12" height="9" fill="none" stroke="#1c64c8" stroke-width="1.300"/><path d="M924 388.500 h9 M924 391.500 h9 M926.500 386 v8 M930.500 386 v8" stroke="#1c64c8" stroke-width="0.900"/>
<circle cx="944.500" cy="388.500" r="2.300" fill="#1c64c8"/><path d="M940 397 q0 -5 4.500 -5 q4.500 0 4.500 5 z" fill="#1c64c8"/>
</svg>
<div class="abs" style="left:833px;top:395px;width:122px;height:105px;background:#464646"></div>
<div class="abs" style="left:955px;top:401px;width:34px;height:99px;background:#464646"></div>
<svg class="abs" style="left:0;top:0" width="1000" height="500" viewBox="0 0 1000 500">
<rect x="135" y="129" width="385" height="233" fill="none" stroke="#e8383c" stroke-width="2"/>
<rect x="814.500" y="100.500" width="105.500" height="31.500" fill="none" stroke="#e8383c" stroke-width="2.400"/>
<path d="M445.6 372.0 L455.9 384.7 L454.5 380.8 L652.4 481.7 L653.6 479.3 L457.9 374.3 L461.9 373.2 Z" fill="#e8383c"/>
<path d="M901.5 123.5 L901.1 137.6 L903.1 134.0 L974.7 313.3 L976.3 312.7 L907.4 132.4 L911.4 133.6 Z" fill="#e8383c"/>
</svg>
</body></html>
